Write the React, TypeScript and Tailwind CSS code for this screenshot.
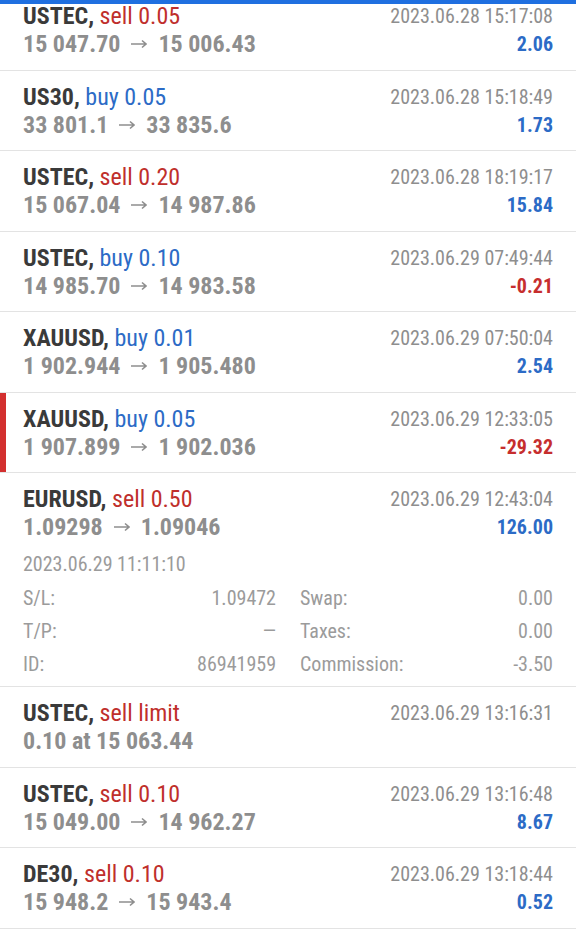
import React from 'react';

type Side = 'buy' | 'sell';

interface Deal {
  symbol: string;
  side: Side;
  label: string;
  prices: React.ReactNode;
  time: string;
  profit?: string;
  marked?: boolean;
  details?: boolean;
}

// thin arrow between open and close price
const arrow = (
  <svg className="mx-[11px] inline-block align-[3px]" width="16" height="10" viewBox="0 0 16 10" fill="none">
    <path d="M0 5H15M11 1.5L15 5L11 8.5" stroke="currentColor" strokeWidth="1.6" />
  </svg>
);

const pr = (a: string, b: string) => (
  <>
    {a}
    {arrow}
    {b}
  </>
);

// * Data
const deals: Deal[] = [
  { symbol: 'USTEC', side: 'sell', label: 'sell 0.05', prices: pr('15 047.70', '15 006.43'), time: '2023.06.28 15:17:08', profit: '2.06' },
  { symbol: 'US30', side: 'buy', label: 'buy 0.05', prices: pr('33 801.1', '33 835.6'), time: '2023.06.28 15:18:49', profit: '1.73' },
  { symbol: 'USTEC', side: 'sell', label: 'sell 0.20', prices: pr('15 067.04', '14 987.86'), time: '2023.06.28 18:19:17', profit: '15.84' },
  { symbol: 'USTEC', side: 'buy', label: 'buy 0.10', prices: pr('14 985.70', '14 983.58'), time: '2023.06.29 07:49:44', profit: '-0.21' },
  { symbol: 'XAUUSD', side: 'buy', label: 'buy 0.01', prices: pr('1 902.944', '1 905.480'), time: '2023.06.29 07:50:04', profit: '2.54' },
  { symbol: 'XAUUSD', side: 'buy', label: 'buy 0.05', prices: pr('1 907.899', '1 902.036'), time: '2023.06.29 12:33:05', profit: '-29.32', marked: true },
  { symbol: 'EURUSD', side: 'sell', label: 'sell 0.50', prices: pr('1.09298', '1.09046'), time: '2023.06.29 12:43:04', profit: '126.00', details: true },
  { symbol: 'USTEC', side: 'sell', label: 'sell limit', prices: '0.10 at 15 063.44', time: '2023.06.29 13:16:31' },
  { symbol: 'USTEC', side: 'sell', label: 'sell 0.10', prices: pr('15 049.00', '14 962.27'), time: '2023.06.29 13:16:48', profit: '8.67' },
  { symbol: 'DE30', side: 'sell', label: 'sell 0.10', prices: pr('15 948.2', '15 943.4'), time: '2023.06.29 13:18:44', profit: '0.52' },
  { symbol: 'US30', side: 'buy', label: 'buy 0.10', prices: pr('34 122.5', '34 160.2'), time: '2023.06.29 13:20:11', profit: '3.77' },
];

function DetailRow({ k, v, k2, v2 }: { k: string; v: string; k2: string; v2: string }) {
  return (
    <div className="grid h-[33px] grid-cols-2 items-center gap-6 text-[20px] text-[#9b9b9b]">
      <div className="flex justify-between">
        <span>{k}</span>
        <span>{v}</span>
      </div>
      <div className="flex justify-between">
        <span>{k2}</span>
        <span>{v2}</span>
      </div>
    </div>
  );
}

function DealRow({ deal }: { deal: Deal }) {
  const negative = deal.profit?.startsWith('-');
  return (
    <li className="relative border-b border-[#e3e3e3] pb-[11.5px] pl-[23px] pr-[23px] pt-3">
      {deal.marked && <div className="absolute left-0 top-0 h-full w-[6px] bg-[#d3302f]" />}

      <div className="flex items-start justify-between">
        <div className="flex flex-col">
          <div className="h-7 text-[24px] leading-7">
            <span className="font-bold text-[#3a3a3a]">{deal.symbol}, </span>
            <span className={deal.side === 'sell' ? 'text-[#bf2f2c]' : 'text-[#2c6bc6]'}>{deal.label}</span>
          </div>
          <div className="h-7 text-[24px] font-bold leading-7 text-[#8e8e8e]">{deal.prices}</div>
        </div>
        <div className="flex flex-col items-end">
          <div className="h-7 text-[20px] leading-7 text-[#8e8e8e]">{deal.time}</div>
          {deal.profit && (
            <div className={`h-7 text-[20px] font-bold leading-7 ${negative ? 'text-[#c62e2e]' : 'text-[#2c6bc6]'}`}>
              {deal.profit}
            </div>
          )}
        </div>
      </div>

      {deal.details && (
        <div className="-mb-[5.5px] pt-[7px]">
          <div className="h-[33px] text-[20px] leading-[33px] text-[#9b9b9b]">2023.06.29 11:11:10</div>
          <DetailRow k="S/L:" v="1.09472" k2="Swap:" v2="0.00" />
          <DetailRow k="T/P:" v="—" k2="Taxes:" v2="0.00" />
          <DetailRow k="ID:" v="86941959" k2="Commission:" v2="-3.50" />
        </div>
      )}
    </li>
  );
}

export default function App() {
  return (
    <div
      className="relative h-[940px] w-[576px] overflow-hidden bg-white [font-stretch:condensed]"
      style={{ fontFamily: '"Roboto Condensed", "Liberation Sans Narrow", "Roboto", sans-serif' }}
    >
      {/* Header edge */}
      <div className="absolute left-0 top-0 z-10 h-1 w-full bg-[#1f6fe0]" />

      <ul className="-mt-[10px] flex flex-col">
        {deals.map((d, i) => (
          <DealRow key={i} deal={d} />
        ))}
      </ul>
    </div>
  );
}
